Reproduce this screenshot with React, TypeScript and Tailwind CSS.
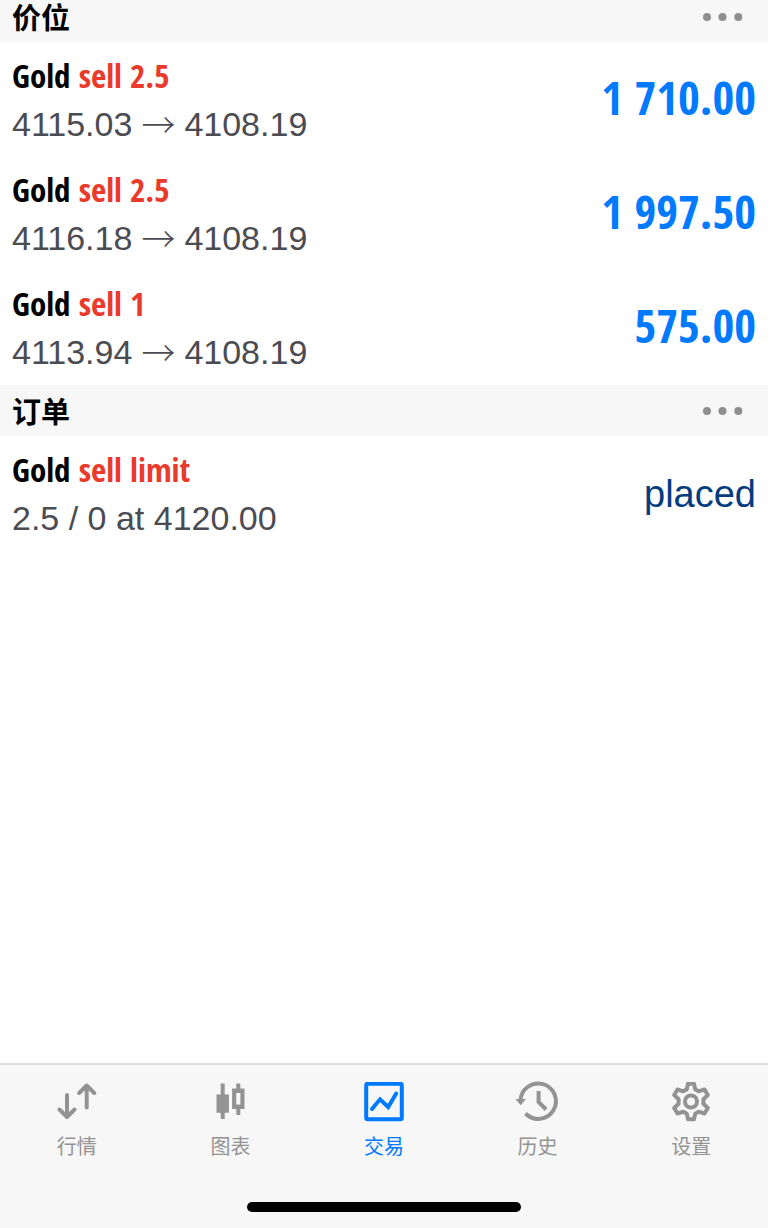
import React, { useState } from 'react';
import clsx from 'clsx';

interface Entry {
  id: string;
  symbol: string;
  side: string;
  from?: string;
  to?: string;
  detail?: string;
  value: string;
  pending?: boolean;
}

const positions: Entry[] = [
  { id: 'p1', symbol: 'Gold', side: 'sell 2.5', from: '4115.03', to: '4108.19', value: '1 710.00' },
  { id: 'p2', symbol: 'Gold', side: 'sell 2.5', from: '4116.18', to: '4108.19', value: '1 997.50' },
  { id: 'p3', symbol: 'Gold', side: 'sell 1', from: '4113.94', to: '4108.19', value: '575.00' },
];

const orders: Entry[] = [
  { id: 'o1', symbol: 'Gold', side: 'sell limit', detail: '2.5 / 0 at 4120.00', value: 'placed', pending: true },
];

function QuotesIcon() {
  return (
    <svg viewBox="0 0 40 40" className="size-10" fill="none" stroke="currentColor" strokeWidth="4" strokeLinecap="round" strokeLinejoin="round">
      <path d="M10 13V35M2.500 27.500l7.500 7.500 7.500-7.500" />
      <path d="M29.700 25.500V3.500M22.200 11l7.500-7.500 7.500 7.500" />
    </svg>
  );
}

function ChartIcon() {
  return (
    <svg viewBox="0 0 40 40" className="size-10" fill="currentColor">
      <path d="M10.700 1.500h4v11h4.200v18.300h-4.200V37h-4v-6.200H6.500V12.500h4.200z" />
      <path fillRule="evenodd" d="M26.300 1.500h4v5h4.200V27h-4.200v6h-4v-6h-4.200V6.500h4.200zM26.200 11v11.500h4.200V11z" />
    </svg>
  );
}

function TradeIcon() {
  return (
    <svg viewBox="0 0 40 40" className="size-10" fill="none" stroke="currentColor" strokeWidth="4" strokeLinecap="round">
      <rect x="2.200" y="1.700" width="35.600" height="35.600" rx="1.500" />
      <path d="M8 27l8-9.700 8.200 7.700L32.200 11.500" />
    </svg>
  );
}

function HistoryIcon() {
  return (
    <svg viewBox="0 0 40 40" className="size-10 overflow-visible" fill="none" stroke="currentColor" strokeWidth="4">
      <path d="M2.500 19A17.700 17.700 0 1 1 7.500 31.500" />
      <path d="M-2.500 17H7.900L2.700 23.300z" fill="currentColor" stroke="none" />
      <path d="M20.600 9v11l7.500 7.500" />
    </svg>
  );
}

function SettingsIcon() {
  return (
    <svg viewBox="0 0 40 40" className="size-10" fill="none" stroke="currentColor" strokeWidth="4" strokeLinejoin="round">
      <path d="M17 1.700h6l1.200 5.600 3.400 2 5.900-1.800 3.300 5.500-4.400 4.200v4.600l4.400 4.200-3.300 5.500-5.900-1.800-3.400 2L23 37.300h-6l-1.200-5.600-3.400-2-5.900 1.800L3.200 26l4.400-4.200v-4.600L3.200 13l3.300-5.500 5.900 1.800 3.400-2z" />
      <circle cx="20" cy="19.500" r="6" />
    </svg>
  );
}

const tabs = [
  { id: 'quotes', label: '行情', Icon: QuotesIcon },
  { id: 'chart', label: '图表', Icon: ChartIcon },
  { id: 'trade', label: '交易', Icon: TradeIcon },
  { id: 'history', label: '历史', Icon: HistoryIcon },
  { id: 'settings', label: '设置', Icon: SettingsIcon },
];

function SectionHeader({ title, className }: { title: string; className?: string }) {
  return (
    <div className={clsx('flex items-center justify-between bg-[#f7f7f7] px-3', className)}>
      <h2 className="pt-1 text-[29px] leading-8 font-bold">{title}</h2>
      <button type="button" aria-label="More" className="px-3 py-3 text-[#8e8e8e]">
        <svg viewBox="0 0 42 10" className="h-[10px] w-[42px]" fill="currentColor">
          <circle cx="5" cy="5" r="4" />
          <circle cx="20.500" cy="5" r="4" />
          <circle cx="36.300" cy="5" r="4" />
        </svg>
      </button>
    </div>
  );
}

function EntryRow({ entry }: { entry: Entry }) {
  return (
    <li className="flex items-center justify-between px-3 pt-[10px] pb-2">
      <div>
        <p className="font-['Open_Sans_Condensed','Open_Sans',sans-serif] text-[33px] leading-12 font-bold">
          {entry.symbol} <span className="text-[#e93a2b]">{entry.side}</span>
        </p>
        <p className="flex h-12 items-center gap-[9px] text-[34px] leading-12 text-[#4b4b52]">
          {entry.detail ?? (
            <>
              <span>{entry.from}</span>
              <span className="font-['Noto_Sans_CJK_SC',sans-serif] font-light">→</span>
              <span>{entry.to}</span>
            </>
          )}
        </p>
      </div>
      {entry.pending ? (
        <span className="text-[38px] leading-12 text-[#053c80]">{entry.value}</span>
      ) : (
        <span className="pb-1.5 font-['Open_Sans_Condensed','Open_Sans',sans-serif] text-[47px] leading-12 font-bold text-[#007aff]">
          {entry.value}
        </span>
      )}
    </li>
  );
}

export default function App() {
  const [active, setActive] = useState('trade');

  return (
    <div className="flex min-h-screen flex-col bg-white font-['Liberation_Sans','Noto_Sans_CJK_SC',sans-serif] text-black">
      <main className="flex-1">
        <SectionHeader title="价位" className="h-[42px] pb-2" />
        <ul className="pb-px">
          {positions.map((entry) => (
            <EntryRow key={entry.id} entry={entry} />
          ))}
        </ul>
        <SectionHeader title="订单" className="h-[51px]" />
        <ul>
          {orders.map((entry) => (
            <EntryRow key={entry.id} entry={entry} />
          ))}
        </ul>
      </main>

      <footer className="border-t-2 border-[#dedede] bg-[#f7f7f7] pb-4">
        <nav className="grid grid-cols-5 pt-[17px]">
          {tabs.map(({ id, label, Icon }) => (
            <button
              key={id}
              type="button"
              onClick={() => setActive(id)}
              className={clsx('flex flex-col items-center gap-[13px]', active === id ? 'text-[#007aff]' : 'text-[#939393]')}
            >
              <Icon />
              <span className="text-xl leading-6">{label}</span>
            </button>
          ))}
        </nav>
        <div className="mx-auto mt-[43px] h-[10px] w-[274px] rounded-full bg-black" />
      </footer>
    </div>
  );
}
